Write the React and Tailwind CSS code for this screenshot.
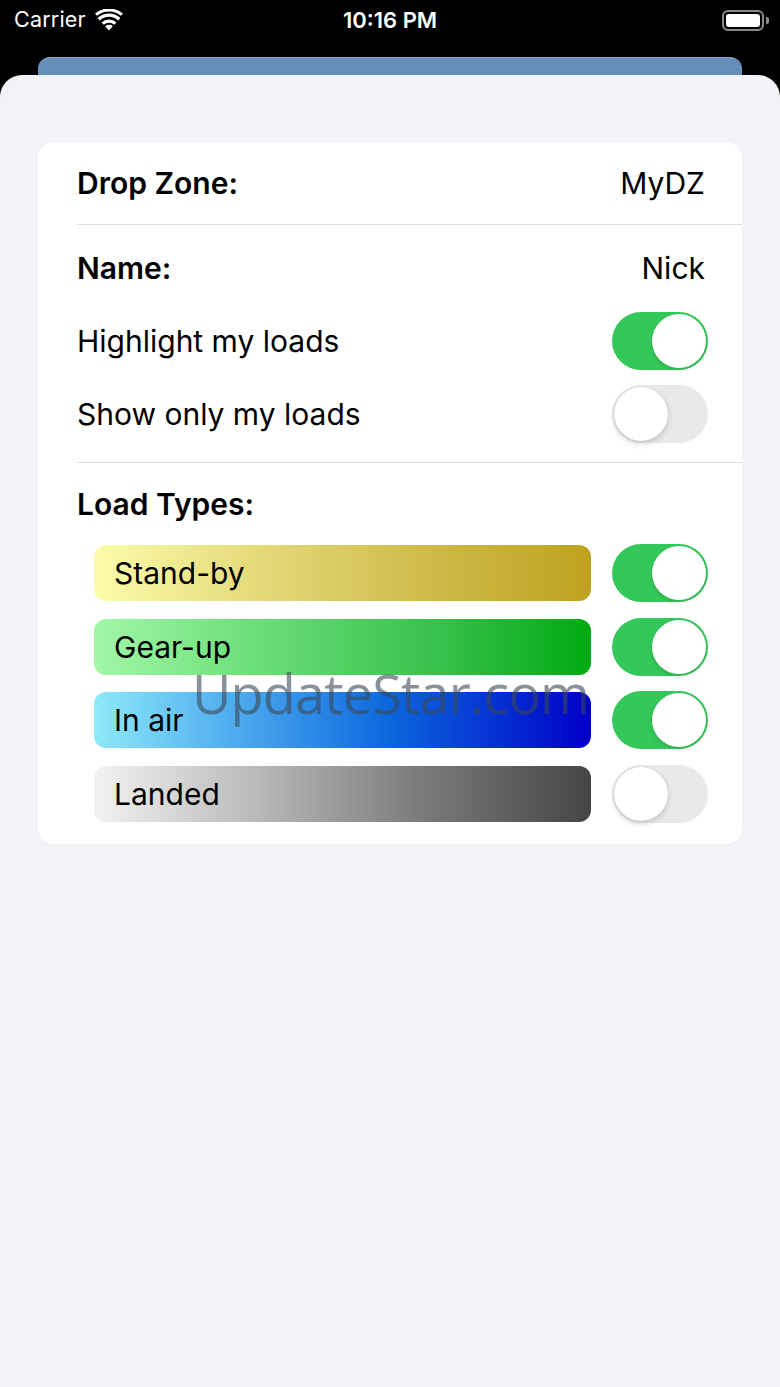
import React from "react";

function Toggle({ on }) {
  return on ? (
    <div className="relative h-[58px] w-[96px] shrink-0 rounded-full bg-[#34c759]">
      <div className="absolute right-[2px] top-[2px] h-[54px] w-[54px] rounded-full bg-white shadow-[0_2px_4px_rgba(0,0,0,0.12)]" />
    </div>
  ) : (
    <div className="relative h-[58px] w-[96px] shrink-0 rounded-full bg-[#e9e9eb]">
      <div className="absolute left-[2px] top-[2px] h-[54px] w-[54px] rounded-full bg-white shadow-[0_3px_6px_rgba(0,0,0,0.15),0_0_1px_rgba(0,0,0,0.2)]" />
    </div>
  );
}

function Wifi() {
  return (
    <svg width="28" height="22" viewBox="0 0 28 22" className="ml-[9px]">
      <path d="M14 21.5 L10.2 17.3 A5.6 5.6 0 0 1 17.8 17.3 Z" fill="white" />
      <path d="M6.6 13.4 A10.8 10.8 0 0 1 21.4 13.4 L19.2 15.8 A7.6 7.6 0 0 0 8.8 15.8 Z" fill="white" />
      <path d="M2.6 9 A16.6 16.6 0 0 1 25.4 9 L23.2 11.4 A13.4 13.4 0 0 0 4.8 11.4 Z" fill="white" />
      <path d="M0 4.6 A21.6 21.6 0 0 1 28 4.6 L26 6.8 A18.6 18.6 0 0 0 2 6.8 Z" fill="white" />
    </svg>
  );
}

function Battery() {
  return (
    <div className="flex items-center">
      <div className="flex h-[21px] w-[42px] items-center rounded-[6px] border-[2px] border-[#8a8a8a] p-[2px]">
        <div className="h-full w-full rounded-[3px] bg-white" />
      </div>
      <div className="ml-[2px] h-[7px] w-[3px] rounded-r-[2px] bg-[#8a8a8a]" />
    </div>
  );
}

const loadTypes = [
  { label: "Stand-by", cls: "bg-[linear-gradient(90deg,#fbfcaa,#e2d876_35%,#cdb846_70%,#bea21f)]", on: true },
  { label: "Gear-up", cls: "bg-[linear-gradient(90deg,#a2f7a8,#6fe07b_30%,#36c04a_70%,#00aa12)]", on: true },
  { label: "In air", cls: "bg-[linear-gradient(90deg,#8ee9f8,#4aa8ee_30%,#0b66dc_60%,#0000c8)]", on: true },
  { label: "Landed", cls: "bg-[linear-gradient(90deg,#f2f2f2,#b5b5b5_35%,#7c7c7c_65%,#454545)]", on: false },
];

export default function App() {
  return (
    <div
      className="relative flex min-h-[1387px] w-[780px] flex-col overflow-hidden bg-black"
      style={{ fontFamily: "Inter, 'Noto Sans', sans-serif" }}
    >
      {/* status bar */}
      <div className="relative flex h-[40px] items-center px-[14px] text-white">
        <span className="text-[21.5px] leading-none tracking-[0.2px]">Carrier</span>
        <Wifi />
        <span className="absolute left-1/2 top-[8px] -translate-x-1/2 text-[22px] font-semibold leading-[24px]">
          10:16 PM
        </span>
        <div className="ml-auto mr-[-3px]">
          <Battery />
        </div>
      </div>

      {/* card behind */}
      <div className="mx-[38px] mt-[17px] h-[30px] rounded-t-[12px] border-t border-[#86a7c8] bg-[#658fb8]" />

      {/* sheet */}
      <div className="relative -mt-[12px] flex flex-1 flex-col rounded-t-[22px] bg-[#f2f2f7] pt-[67px]">
        <div className="mx-[38px] rounded-[16px] bg-white pb-[21px] text-[30px] leading-none text-black">
          <div className="flex h-[82px] items-center justify-between pl-[39px] pr-[37px]">
            <span className="font-semibold">Drop Zone:</span>
            <span>MyDZ</span>
          </div>
          <div className="ml-[39px] h-[1px] bg-[#dededf]" />
          <div className="pt-[6px]">
            <div className="flex h-[73px] items-center justify-between pl-[39px] pr-[37px]">
              <span className="font-semibold">Name:</span>
              <span>Nick</span>
            </div>
            <div className="flex h-[73px] items-center justify-between pl-[39px] pr-[34px]">
              <span>Highlight my loads</span>
              <Toggle on />
            </div>
            <div className="flex h-[73px] items-center justify-between pl-[39px] pr-[34px]">
              <span>Show only my loads</span>
              <Toggle on={false} />
            </div>
          </div>
          <div className="ml-[39px] mt-[12px] h-[1px] bg-[#dededf]" />
          <div className="flex h-[81px] items-center pl-[39px]">
            <span className="font-semibold">Load Types:</span>
          </div>
          <div className="flex flex-col gap-[15.5px] pl-[56px] pr-[34px]">
            {loadTypes.map((t) => (
              <div key={t.label} className="flex items-center gap-[21px]">
                <div className={`flex h-[56px] flex-1 items-center rounded-[12px] pl-[20px] ${t.cls}`}>
                  <span>{t.label}</span>
                </div>
                <Toggle on={t.on} />
              </div>
            ))}
          </div>
        </div>
      </div>

      {/* watermark */}
      <div
        className="pointer-events-none absolute left-[192px] top-[666px] text-[54px] leading-none tracking-[-0.8px] text-[rgba(60,72,84,0.6)]"
        style={{ fontFamily: "'Open Sans', sans-serif" }}
      >
        UpdateStar.com
      </div>
    </div>
  );
}
